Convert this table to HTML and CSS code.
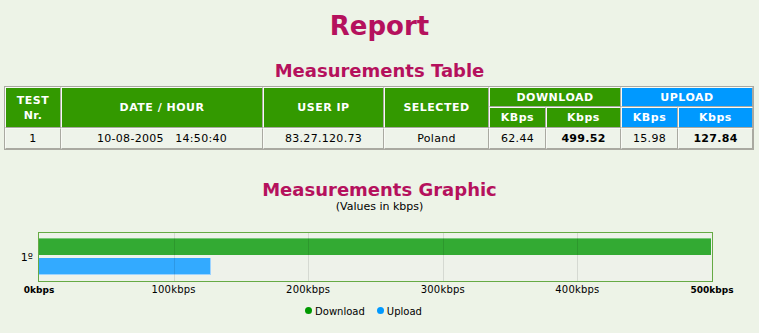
FILE: index.html
```html
<!DOCTYPE html>
<html>
<head>
<meta charset="utf-8">
<title>Report</title>
<link rel="stylesheet" href="styles.css">
</head>
<body>
<h1 class="title">Report</h1>
<h2 class="section-title">Measurements Table</h2>
<table class="results">
  <colgroup>
    <col class="c-test"><col class="c-date"><col class="c-ip"><col class="c-sel">
    <col class="c-kb"><col class="c-kbit"><col class="c-kb"><col class="c-kbit">
  </colgroup>
  <tr class="head-top">
    <th rowspan="2" class="green two-line">TEST<br>Nr.</th>
    <th rowspan="2" class="green">DATE / HOUR</th>
    <th rowspan="2" class="green">USER IP</th>
    <th rowspan="2" class="green">SELECTED</th>
    <th colspan="2" class="green">DOWNLOAD</th>
    <th colspan="2" class="blue">UPLOAD</th>
  </tr>
  <tr class="head-sub">
    <th class="green">KBps</th>
    <th class="green">Kbps</th>
    <th class="blue">KBps</th>
    <th class="blue">Kbps</th>
  </tr>
  <tr class="data">
    <td>1</td>
    <td>10-08-2005&nbsp;&nbsp;&nbsp;14:50:40</td>
    <td>83.27.120.73</td>
    <td>Poland</td>
    <td>62.44</td>
    <td class="strong">499.52</td>
    <td>15.98</td>
    <td class="strong">127.84</td>
  </tr>
</table>

<h2 class="section-title graphic-title">Measurements Graphic</h2>
<div class="note">(Values in kbps)</div>

<div class="chart">
  <div class="chart-row">
    <div class="y-label">1º</div>
    <div class="plot">
      <div class="grid">
        <span class="gridline" style="left:20%"></span>
        <span class="gridline" style="left:40%"></span>
        <span class="gridline" style="left:60%"></span>
        <span class="gridline" style="left:80%"></span>
      </div>
      <div class="bar bar-down" style="width:99.9%"></div>
      <div class="bar bar-up" style="width:25.57%"></div>
    </div>
  </div>
  <div class="axis">
    <span class="tick end" style="left:0%">0kbps</span>
    <span class="tick" style="left:20%">100kbps</span>
    <span class="tick" style="left:40%">200kbps</span>
    <span class="tick" style="left:60%">300kbps</span>
    <span class="tick" style="left:80%">400kbps</span>
    <span class="tick end" style="left:100%">500kbps</span>
  </div>
  <div class="legend">
    <span class="legend-item"><span class="dot dot-down"></span>Download</span>
    <span class="legend-item"><span class="dot dot-up"></span>Upload</span>
  </div>
</div>
</body>
</html>
```

FILE: styles.css
```css
html, body {
  margin: 0;
  padding: 0;
  background: #edf3e7;
  font-family: "DejaVu Sans", Verdana, sans-serif;
  color: #000;
}

.title {
  margin: 11px 0 0;
  font-size: 26px;
  line-height: 30px;
  font-weight: 700;
  text-align: center;
  color: #b5115d;
}

.section-title {
  margin: 20px 0 0;
  font-size: 18px;
  line-height: 20px;
  font-weight: 700;
  text-align: center;
  color: #b5115d;
}

/* ---------- table ---------- */
.results {
  margin: 5px 0 0 4px;
  width: 750px;
  table-layout: fixed;
  border-collapse: separate;
  border-spacing: 0;
  border: 1px solid #a9a9a1;
  font-size: 11px;
}

.c-test { width: 56px; }
.c-date { width: 202px; }
.c-ip { width: 121px; }
.c-sel { width: 105px; }
.c-kb { width: 57px; }
.c-kbit { width: 75px; }

.results th,
.results td {
  padding: 0;
  text-align: center;
  vertical-align: middle;
  border-top: 1px solid #f8faf5;
  border-left: 1px solid #f8faf5;
  border-right: 1px solid #a9a9a1;
  border-bottom: 1px solid #a9a9a1;
}

.results th {
  color: #fff;
  font-weight: 700;
  letter-spacing: 0.5px;
  line-height: 13px;
}

.results th.two-line {
  line-height: 15px;
}

.green { background: #339900; }
.blue { background: #0099ff; }

.head-top th { height: 18px; }
.head-sub th { height: 19px; }

.results td {
  height: 19px;
  line-height: 13px;
  letter-spacing: 0.3px;
  background: #eef3ea;
}

.results td.strong {
  font-weight: 700;
}

/* ---------- chart ---------- */
.graphic-title {
  margin-top: 30px;
}

.note {
  font-size: 11px;
  line-height: 13px;
  text-align: center;
}

.chart {
  margin-top: 19px;
}

.chart-row {
  display: flex;
  align-items: center;
}

.y-label {
  width: 38px;
  box-sizing: border-box;
  padding-right: 5px;
  text-align: right;
  font-size: 11px;
  line-height: 13px;
}

.plot {
  position: relative;
  width: 675px;
  box-sizing: border-box;
  border: 1px solid #66aa44;
  background: #eef2ea;
  padding: 5px 0 6px;
  display: flex;
  flex-direction: column;
  gap: 3px;
}

.grid {
  position: absolute;
  inset: 0;
  pointer-events: none;
  z-index: 2;
}

.gridline {
  position: absolute;
  top: 0;
  bottom: 0;
  width: 1px;
  background: rgba(0, 0, 0, 0.1);
}

.bar {
  height: 17px;
  box-sizing: border-box;
}

.bar-down {
  background: #33aa33;
  border-top: 1px solid #7cc77c;
}

.bar-up {
  background: #33aaff;
  border-right: 1px solid #9cd3ff;
  border-bottom: 1px solid #9cd3ff;
}

.axis {
  position: relative;
  margin: 2px 0 0 39px;
  width: 673px;
  height: 12px;
  font-size: 10px;
  line-height: 12px;
}

.tick {
  position: absolute;
  top: 0;
  transform: translateX(-50%);
  white-space: nowrap;
  letter-spacing: 0.2px;
}

.tick.end {
  font-weight: 700;
  font-size: 9px;
  letter-spacing: 0;
}

.legend {
  display: flex;
  justify-content: center;
  gap: 12px;
  margin-top: 10px;
  padding-right: 32px;
  font-size: 10px;
  line-height: 12px;
}

.legend-item {
  display: flex;
  align-items: flex-start;
}

.dot {
  width: 7px;
  height: 7px;
  border-radius: 50%;
  margin: 1px 3px 0 0;
}

.dot-down { background: #009900; }
.dot-up { background: #0099ff; }
```
